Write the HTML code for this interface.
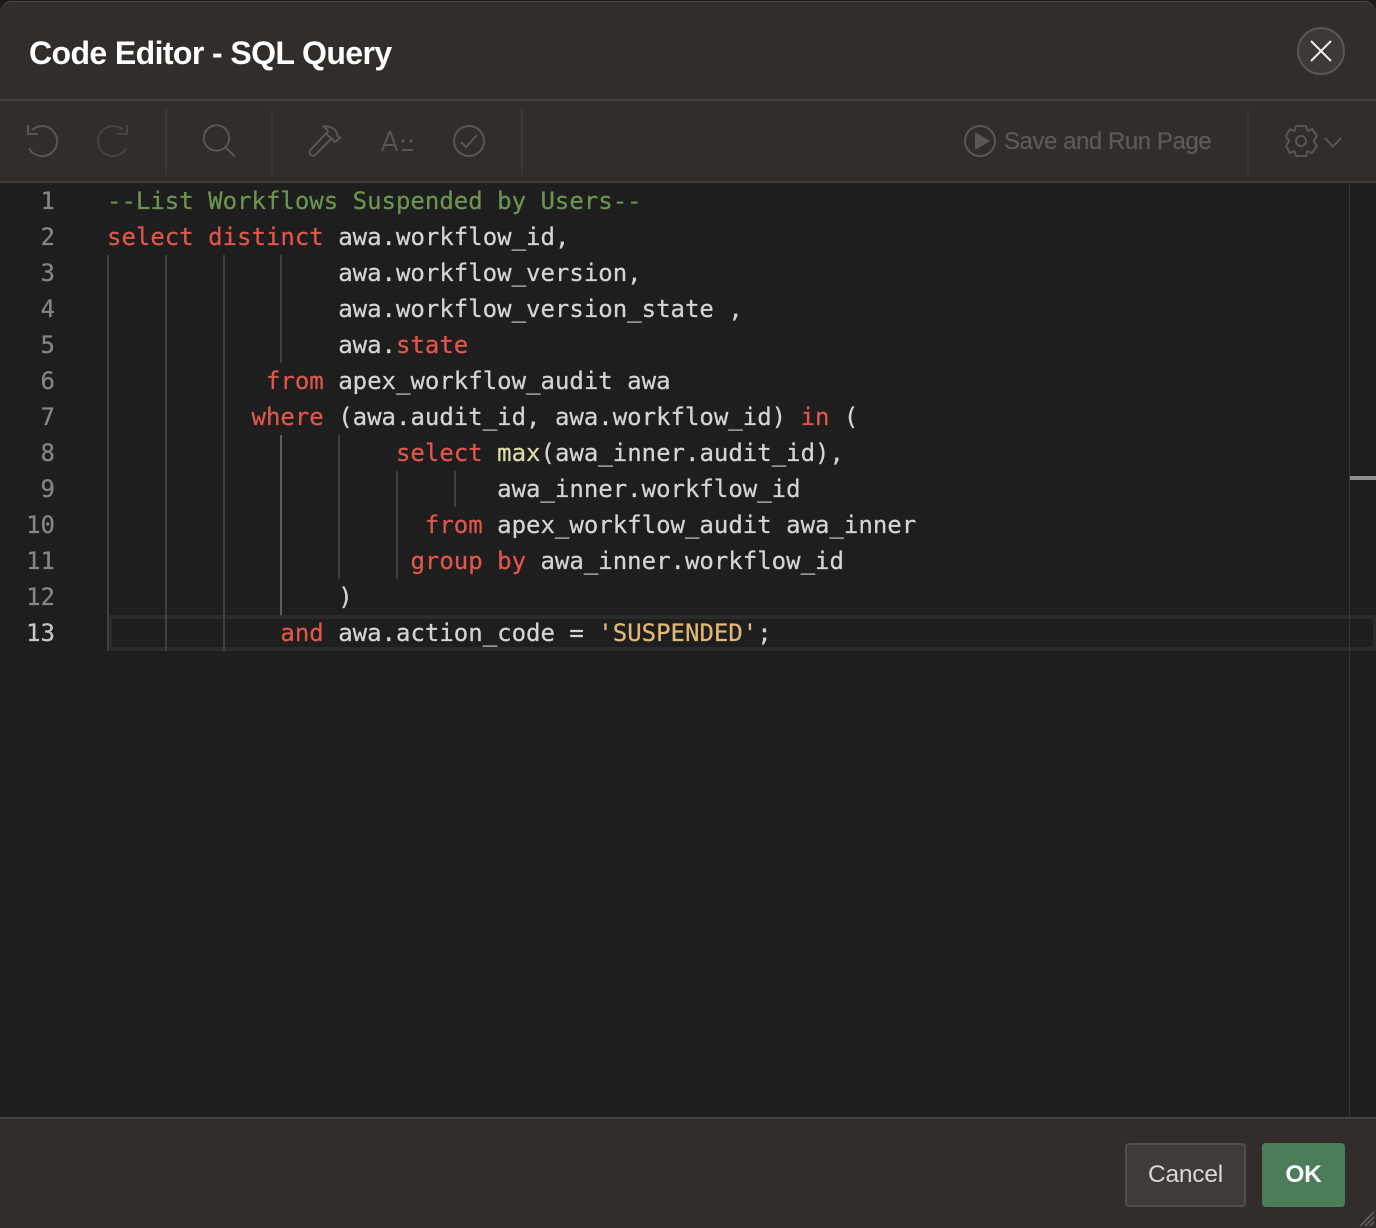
<!DOCTYPE html>
<html><head><meta charset="utf-8"><style>
html,body{margin:0;padding:0;background:#1c1a18;width:1376px;height:1228px;overflow:hidden}
#d{position:absolute;left:0;top:1px;width:1376px;height:1227px;background:#312d2a;border-radius:12px 12px 0 0;box-shadow:inset 0 1px 0 #4d4945;overflow:hidden;font-family:"Liberation Sans",sans-serif}
.a{position:absolute}
#t{left:29px;top:32px;font-size:32px;line-height:40px;font-weight:700;color:#fff;white-space:pre;letter-spacing:-.6px}
.sep{position:absolute;top:108px;width:2px;height:65px;background:#3b3734}
svg{position:absolute;overflow:visible;fill:none}
#ed{left:0;top:182px;width:1376px;height:934px;background:#1e1e1e}
.n,.l{position:absolute;font-family:"DejaVu Sans Mono","Liberation Mono",monospace;font-size:24px;line-height:36px;height:36px;white-space:pre;-webkit-text-stroke:.25px currentColor}
.n{left:0;width:55px;text-align:right;color:#858585}
.l{left:107px;color:#d4d4d4}
.k{color:#e0574a}.c{color:#6a9450}.s{color:#e2b872}.f{color:#dcdcaa}
.g{position:absolute;width:2px;background:#404040}
.b{position:absolute;top:1142px;height:64px;box-sizing:border-box;border-radius:4px;text-align:center;font-size:24.500px;line-height:60px}
</style></head><body><div id="d">
<div class="a" id="t">Code Editor - SQL Query</div>
<div class="a" style="left:1297px;top:26px;width:48px;height:48px;box-sizing:border-box;border-radius:50%;background:#3d3a36;border:2px solid #5a5652"></div>
<svg style="left:0;top:-1px" width="1376" height="200"><path d="M1311 41L1331 61M1331 41L1311 61" stroke="#f0efee" stroke-width="2"/></svg>
<div class="a" style="left:0;top:98px;width:1376px;height:2px;background:#45413d"></div>
<div class="sep" style="left:165px"></div><div class="sep" style="left:271px"></div><div class="sep" style="left:521px"></div><div class="sep" style="left:1247px"></div>
<svg style="left:0;top:-1px" width="1376" height="200" stroke="#5a5652" stroke-width="2">
<path d="M32 130A15 15 0 1 1 29 148.500"/><path d="M28 125V134H38"/>
<path d="M123 130A15 15 0 1 0 126 148.500" stroke="#484440"/><path d="M127 125V134H117" stroke="#484440"/>
<circle cx="216.500" cy="138" r="12.700"/><path d="M225.500 147.500L235 156.500"/>
<path d="M326 133.500L310 150.500C308 153 312.500 157.500 315 155L331.500 138.500L335 142L340.500 137.500L337.500 136C337 130 331 125 323 126.500C326 128 327.500 130 328 132L326 133.500L331.500 138.500" stroke-linejoin="round"/>
<path d="M382 151L389.500 132H390.500L397 151M384.500 145H395"/><circle cx="403" cy="140.700" r="1.500" fill="#5a5652" stroke="none"/><circle cx="411" cy="140.700" r="1.500" fill="#5a5652" stroke="none"/><path d="M402 150H413"/>
<circle cx="469" cy="141" r="15"/><path d="M461 142L466 147L477 135"/>
<circle cx="980" cy="141" r="15"/><path d="M975 132V150L990 141Z" fill="#5a5652" stroke="none"/>
<path d="M1296 126H1306L1307.500 131L1312 129L1317 136L1313.500 141L1317 146L1312 153L1307.500 151L1306 156H1296L1294.500 151L1290 153L1286 146L1289 141L1286 136L1290 129L1294.500 131Z" stroke-linejoin="round"/><circle cx="1301" cy="141" r="5"/>
<path d="M1325 138L1333 146.500L1341 138"/>
</svg>
<div class="a" style="left:1004px;top:125px;font-size:24px;line-height:32px;color:#5e5a56;white-space:pre;letter-spacing:-.45px;-webkit-text-stroke:.2px currentColor">Save and Run Page</div>
<div class="a" style="left:0;top:180px;width:1376px;height:2px;background:#403c39"></div>

<div class="a" id="ed">
<div class="a" style="left:108px;top:432px;width:1268px;height:36px;box-sizing:border-box;border:4px solid #2b2b2b;border-right-width:3px"></div>
<div class="g" style="left:107px;top:72px;height:396px"></div>
<div class="g" style="left:165px;top:72px;height:396px"></div>
<div class="g" style="left:223px;top:72px;height:396px"></div>
<div class="g" style="left:280px;top:72px;height:108px"></div>
<div class="g" style="left:280px;top:252px;height:180px;background:#5e5e5e"></div>
<div class="g" style="left:338px;top:252px;height:144px"></div>
<div class="g" style="left:396px;top:288px;height:108px"></div>
<div class="g" style="left:454px;top:288px;height:36px"></div>
<div class="a" style="left:1349px;top:0;width:1px;height:934px;background:#363636"></div>
<div class="a" style="left:1350px;top:293px;width:26px;height:4px;background:#8e8e8e"></div>
<div class="n" style="top:0">1</div><div class="l" style="top:0"><span class="c">--List Workflows Suspended by Users--</span></div>
<div class="n" style="top:36px">2</div><div class="l" style="top:36px"><span class="k">select distinct</span> awa.workflow_id,</div>
<div class="n" style="top:72px">3</div><div class="l" style="top:72px">                awa.workflow_version,</div>
<div class="n" style="top:108px">4</div><div class="l" style="top:108px">                awa.workflow_version_state ,</div>
<div class="n" style="top:144px">5</div><div class="l" style="top:144px">                awa.<span class="k">state</span></div>
<div class="n" style="top:180px">6</div><div class="l" style="top:180px">           <span class="k">from</span> apex_workflow_audit awa</div>
<div class="n" style="top:216px">7</div><div class="l" style="top:216px">          <span class="k">where</span> (awa.audit_id, awa.workflow_id) <span class="k">in</span> (</div>
<div class="n" style="top:252px">8</div><div class="l" style="top:252px">                    <span class="k">select</span> <span class="f">max</span>(awa_inner.audit_id),</div>
<div class="n" style="top:288px">9</div><div class="l" style="top:288px">                           awa_inner.workflow_id</div>
<div class="n" style="top:324px">10</div><div class="l" style="top:324px">                      <span class="k">from</span> apex_workflow_audit awa_inner</div>
<div class="n" style="top:360px">11</div><div class="l" style="top:360px">                     <span class="k">group by</span> awa_inner.workflow_id</div>
<div class="n" style="top:396px">12</div><div class="l" style="top:396px">                )</div>
<div class="n" style="top:432px;color:#c6c6c6">13</div><div class="l" style="top:432px">            <span class="k">and</span> awa.action_code = <span class="s">'SUSPENDED'</span>;</div>
</div>

<div class="a" style="left:0;top:1116px;width:1376px;height:2px;background:#45413d"></div>
<div class="b" style="left:1125px;width:121px;background:#3f3c37;border:2px solid #524e49;color:#d8d7d5;letter-spacing:-.2px">Cancel</div>
<div class="b" style="left:1262px;width:83px;background:#4b7d5a;color:#fff;font-weight:700;line-height:64px;letter-spacing:-.3px">OK</div>
<svg style="left:0;top:-1px" width="1376" height="1228" stroke="#6a6662" stroke-width="1.500"><path d="M1360 1226L1374 1212M1365 1226L1374 1217M1370 1226L1374 1222"/></svg>
</div></body></html>
